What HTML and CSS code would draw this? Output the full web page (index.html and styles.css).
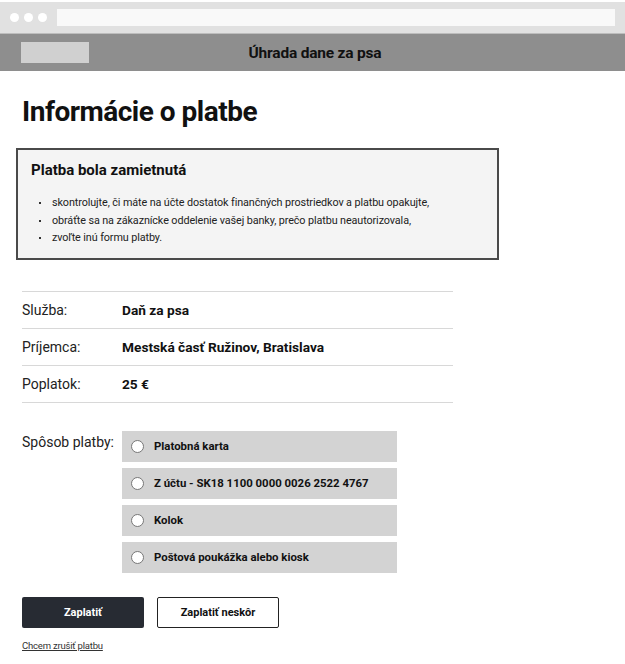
FILE: index.html
```html
<!DOCTYPE html>
<html lang="sk">
<head>
    <meta charset="UTF-8">
    <meta name="viewport" content="width=device-width, initial-scale=1.0">
    <title>Úhrada dane za psa</title>
    <link rel="stylesheet" href="styles.css">
</head>
<body>
    <div class="browser-bar">
        <div class="dots">
            <span class="dot"></span>
            <span class="dot"></span>
            <span class="dot"></span>
        </div>
        <div class="address"></div>
    </div>

    <div class="app-bar">
        <div class="logo"></div>
        <div class="app-title">Úhrada dane za psa</div>
    </div>

    <div class="content">
        <h1>Informácie o platbe</h1>

        <div class="alert">
            <h3>Platba bola zamietnutá</h3>
            <ul>
                <li>skontrolujte, či máte na účte dostatok finančných prostriedkov a platbu opakujte,</li>
                <li>obráťte sa na zákaznícke oddelenie vašej banky, prečo platbu neautorizovala,</li>
                <li>zvoľte inú formu platby.</li>
            </ul>
        </div>

        <div class="details">
            <div class="row">
                <span class="label">Služba:</span>
                <span class="value">Daň za psa</span>
            </div>
            <div class="row">
                <span class="label">Príjemca:</span>
                <span class="value">Mestská časť Ružinov, Bratislava</span>
            </div>
            <div class="row">
                <span class="label">Poplatok:</span>
                <span class="value">25 €</span>
            </div>
        </div>

        <div class="method">
            <div class="label">Spôsob platby:</div>
            <div class="options">
                <label class="option"><span class="radio"></span>Platobná karta</label>
                <label class="option"><span class="radio"></span>Z účtu - SK18 1100 0000 0026 2522 4767</label>
                <label class="option"><span class="radio"></span>Kolok</label>
                <label class="option"><span class="radio"></span>Poštová poukážka alebo kiosk</label>
            </div>
        </div>

        <div class="actions">
            <button class="btn-pay">Zaplatiť</button>
            <button class="btn-later">Zaplatiť neskôr</button>
        </div>

        <a href="#" class="cancel">Chcem zrušiť platbu</a>
    </div>
</body>
</html>
```

FILE: styles.css
```css
body {
    margin: 0;
    font-family: Roboto, "Liberation Sans", sans-serif;
    color: #111;
    background: #fff;
}

.browser-bar {
    margin-top: 2px;
    height: 31px;
    background-color: #e1e1e1;
    border-bottom: 1px solid #bdbdbd;
    display: flex;
    align-items: center;
    padding: 0 10px;
}

.dots {
    display: flex;
    gap: 5px;
}

.dot {
    width: 9px;
    height: 9px;
    border-radius: 50%;
    background: #fff;
}

.address {
    margin-left: 10px;
    flex: 1;
    height: 17px;
    background: #f9f9f9;
}

.app-bar {
    height: 37px;
    background-color: #8e8e8e;
    display: flex;
    align-items: center;
    padding: 0 21px;
}

.logo {
    width: 68px;
    height: 21px;
    background: #d0d0d0;
}

.app-title {
    flex: 1;
    text-align: center;
    font-weight: 700;
    font-size: 15.5px;
    letter-spacing: -0.2px;
    margin-right: 68px;
    padding-left: 5px;
}

.content {
    padding: 0 22px;
}

h1 {
    margin: 24px 0 20px;
    font-size: 28px;
    font-weight: 700;
    letter-spacing: -0.5px;
}

.alert {
    margin-left: -6px;
    background: #f4f4f4;
    border: 2px solid #4a4a4a;
    padding: 11px 13px 11px;
    width: 453px;
}

.alert h3 {
    margin: 0 0 15px;
    font-size: 15px;
    font-weight: 700;
}

.alert ul {
    margin: 0;
    padding: 0;
    list-style: none;
    font-size: 10.8px;
    line-height: 17.5px;
    color: #222;
    letter-spacing: -0.1px;
}

.alert li {
    padding-left: 21px;
    position: relative;
}

.alert li::before {
    content: "";
    position: absolute;
    left: 8px;
    top: 8px;
    width: 2px;
    height: 2px;
    background: #333;
}

.details {
    margin-top: 31px;
    width: 431px;
    border-top: 1px solid #d8d8d8;
}

.row {
    display: flex;
    align-items: center;
    height: 36px;
    border-bottom: 1px solid #d8d8d8;
    font-size: 14px;
}

.label {
    width: 100px;
    color: #222;
}

.value {
    font-weight: 700;
    font-size: 13.7px;
}

.method {
    margin-top: 28px;
    display: flex;
}

.method .label {
    font-size: 14px;
    padding-top: 3px;
}

.options {
    display: flex;
    flex-direction: column;
    gap: 6px;
}

.option {
    width: 275px;
    height: 31px;
    background: #d3d3d3;
    display: flex;
    align-items: center;
    padding-left: 9px;
    box-sizing: border-box;
    font-size: 11.4px;
    font-weight: 700;
}

.radio {
    width: 11px;
    height: 11px;
    border: 1px solid #777;
    border-radius: 50%;
    background: #fff;
    margin-right: 10px;
}

.actions {
    margin-top: 24px;
    display: flex;
    gap: 13px;
}

button {
    width: 122px;
    height: 31px;
    border-radius: 2px;
    font-family: inherit;
    font-size: 11px;
    font-weight: 700;
    cursor: pointer;
}

.btn-pay {
    background-color: #272b33;
    border: none;
    color: #fff;
}

.btn-later {
    background-color: #fff;
    border: 1px solid #222;
    color: #111;
}

.cancel {
    display: inline-block;
    margin-top: 12px;
    font-size: 9.5px;
    color: #333;
    letter-spacing: -0.2px;
}
```
